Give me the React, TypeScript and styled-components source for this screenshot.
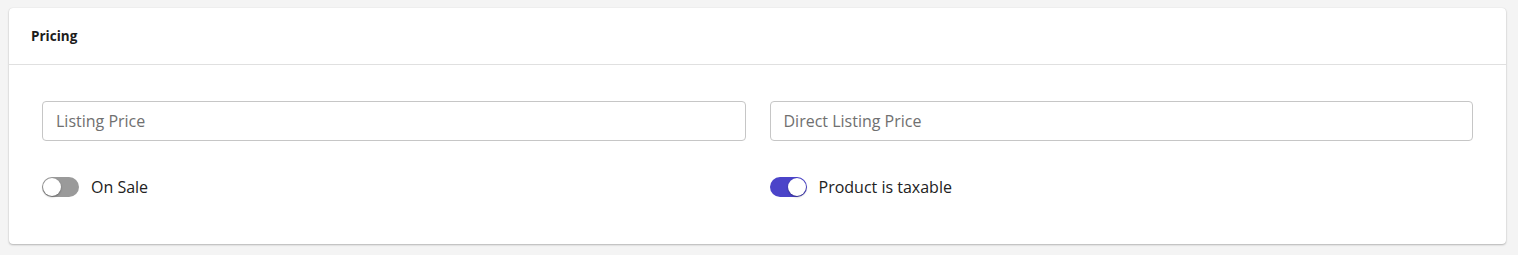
import React, { useState } from "react";
import styled, { createGlobalStyle } from "styled-components";

const Global = createGlobalStyle`
  html, body { margin: 0; padding: 0; background: #f4f4f4; }
  body { font-family: "Open Sans", "Noto Sans", sans-serif; color: #212121; }
  * { box-sizing: border-box; }
`;

const Page = styled.div`
  padding: 8px 12px 10px 9px;
`;

const Card = styled.section`
  background: #fff;
  border-radius: 4px;
  box-shadow: 0 1px 2px rgba(0,0,0,0.25), 0 0 1px rgba(0,0,0,0.12);
`;

const Header = styled.div`
  height: 57px;
  display: flex;
  align-items: center;
  padding: 0 22px;
  border-bottom: 1px solid #e0e0e0;
`;

const Title = styled.h2`
  margin: 0;
  font-size: 13.5px;
  font-weight: 700;
  color: #1c1c1c;
`;

const Body = styled.div`
  padding: 36px 33px 47px 33px;
  display: grid;
  grid-template-columns: 1fr 1fr;
  column-gap: 24px;
  row-gap: 36px;
`;

const Input = styled.input`
  width: 100%;
  height: 40px;
  border: 1px solid #c6c6c6;
  border-radius: 4px;
  padding: 0 13px;
  font-family: inherit;
  font-size: 16px;
  color: #333;
  outline: none;
  &::placeholder { color: #707070; }
`;

const ToggleRow = styled.label`
  display: flex;
  align-items: center;
  gap: 12px;
  font-size: 16px;
  color: #222;
  cursor: pointer;
  height: 20px;
`;

const Track = styled.span<{ $on: boolean }>`
  position: relative;
  width: 37px;
  height: 20px;
  border-radius: 10px;
  background: ${p => (p.$on ? "#4b44c9" : "#9a9a9a")};
  flex-shrink: 0;
`;

const Knob = styled.span<{ $on: boolean }>`
  position: absolute;
  top: 1px;
  left: ${p => (p.$on ? "18px" : "1px")};
  width: 18px;
  height: 18px;
  border-radius: 50%;
  background: #fff;
  box-shadow: 0 1px 2px rgba(0,0,0,0.35);
`;

const Toggle: React.FC<{ label: string; initial: boolean }> = ({ label, initial }) => {
  const [on, setOn] = useState(initial);
  return (
    <ToggleRow onClick={() => setOn(!on)}>
      <Track $on={on}><Knob $on={on} /></Track>
      <span>{label}</span>
    </ToggleRow>
  );
};

export default function App() {
  return (
    <>
      <Global />
      <Page>
        <Card>
          <Header><Title>Pricing</Title></Header>
          <Body>
            <Input placeholder="Listing Price" />
            <Input placeholder="Direct Listing Price" />
            <Toggle label="On Sale" initial={false} />
            <Toggle label="Product is taxable" initial={true} />
          </Body>
        </Card>
      </Page>
    </>
  );
}
